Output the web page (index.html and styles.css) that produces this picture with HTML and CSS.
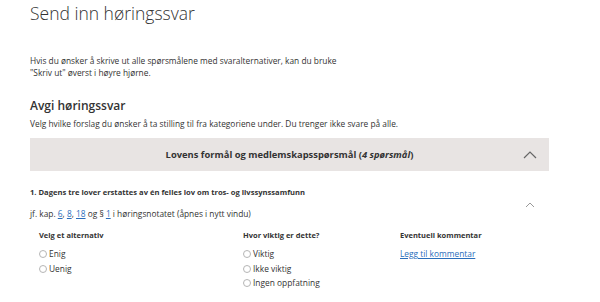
FILE: index.html
```html
<!DOCTYPE html>
<html lang="no">
<head>
  <meta charset="UTF-8">
  <title>Send inn høringssvar</title>
  <link rel="stylesheet" href="styles.css">
</head>
<body>
  <div class="page">
    <h1>Send inn høringssvar</h1>

    <p class="intro">Hvis du ønsker å skrive ut alle spørsmålene med svaralternativer, kan du bruke<br>"Skriv ut" øverst i høyre hjørne.</p>

    <h2>Avgi høringssvar</h2>
    <p class="lead">Velg hvilke forslag du ønsker å ta stilling til fra kategoriene under. Du trenger ikke svare på alle.</p>

    <div class="category">
      <span>Lovens formål og medlemskapsspørsmål (<em>4 spørsmål</em>)</span>
      <svg class="chevron" width="14" height="9" viewBox="0 0 14 9"><path d="M1 8 L7 2 L13 8" fill="none" stroke="#666" stroke-width="1.2"/></svg>
    </div>

    <div class="question">
      <div class="q-head">
        <h3>1. Dagens tre lover erstattes av én felles lov om tros- og livssynssamfunn</h3>
        <svg class="chevron small" width="10" height="6" viewBox="0 0 10 6"><path d="M1 5 L5 1 L9 5" fill="none" stroke="#999" stroke-width="1"/></svg>
      </div>
      <p class="ref">jf. kap. <a href="#">6</a>, <a href="#">8</a>, <a href="#">18</a> og § <a href="#">1</a> i høringsnotatet (åpnes i nytt vindu)</p>

      <div class="answers">
        <div class="col">
          <h4>Velg et alternativ</h4>
          <label class="radio"><span class="dot"></span>Enig</label>
          <label class="radio"><span class="dot"></span>Uenig</label>
        </div>
        <div class="col">
          <h4>Hvor viktig er dette?</h4>
          <label class="radio"><span class="dot"></span>Viktig</label>
          <label class="radio"><span class="dot"></span>Ikke viktig</label>
          <label class="radio"><span class="dot"></span>Ingen oppfatning</label>
        </div>
        <div class="col">
          <h4>Eventuell kommentar</h4>
          <a class="comment" href="#">Legg til kommentar</a>
        </div>
      </div>
    </div>
  </div>
</body>
</html>
```

FILE: styles.css
```css
* { margin: 0; padding: 0; box-sizing: border-box; }
body { font-family: "Open Sans", "Liberation Sans", sans-serif; color: #333; background: #fff; font-size: 8.35px; line-height: 12px; }
.page { width: 549px; padding-left: 30px; }
h1 { font-size: 17.5px; line-height: 24px; font-weight: 300; margin-top: 1px; color: #333; }
.intro { margin-top: 30px; }
h2 { font-size: 12px; line-height: 16px; font-weight: 600; margin-top: 19px; }
.lead { margin-top: 4px; }
.category { position: relative; background: #e8e4e3; height: 33px; margin-top: 8px; display: flex; align-items: center; justify-content: center; font-size: 9.4px; font-weight: 700; }
.category em { font-style: italic; }
.chevron { position: absolute; right: 12px; top: 12px; }
.question { padding-top: 15px; }
.q-head { position: relative; }
.q-head h3 { font-size: 7.6px; font-weight: 700; line-height: 12px; }
.chevron.small { right: 14px; top: 16px; }
.ref { margin-top: 10px; }
a { color: #2a6ebb; }
.answers { display: grid; grid-template-columns: 204px 157px 1fr; padding-left: 9px; margin-top: 9px; }
h4 { font-size: 7.5px; font-weight: 700; line-height: 12px; margin-bottom: 6px; }
.radio { display: flex; align-items: center; gap: 2px; line-height: 14.5px; font-size: 8.4px; }
.dot { width: 8px; height: 8px; border: 1px solid #b5b5b5; border-radius: 50%; }
.comment { display: block; margin-top: 7px; font-size: 8.35px; }
```
